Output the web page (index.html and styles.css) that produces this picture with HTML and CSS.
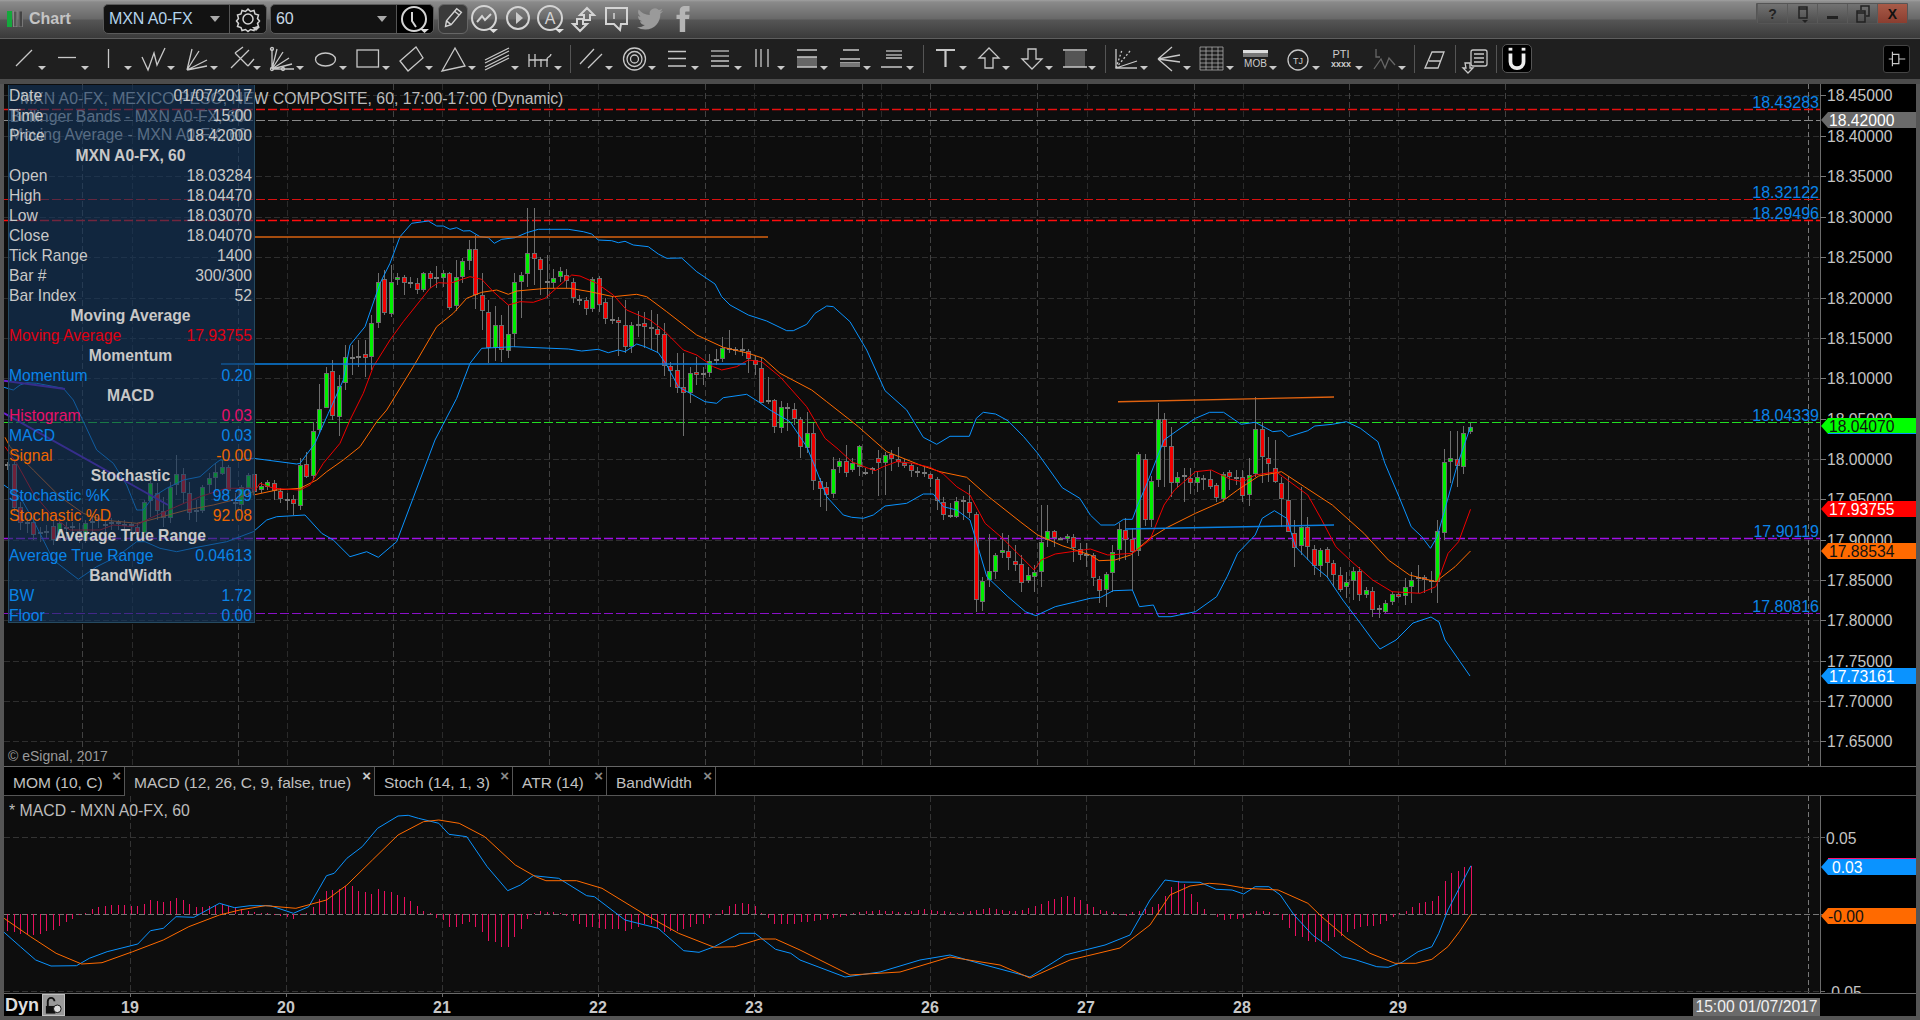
FILE: index.html
```html
<!DOCTYPE html>
<html lang="en">
<head>
<meta charset="utf-8">
<title>Chart</title>
<link rel="stylesheet" href="styles.css">
</head>
<body>
<div class="app">
  <header class="titlebar">
    <svg class="logo" viewBox="0 0 16 16" width="16" height="16"><rect x="0" y="0" width="5" height="16" fill="#14a83c"/><rect x="6.5" y="0" width="3.5" height="16" fill="#555" stroke="#888"/><rect x="12" y="0" width="3.5" height="16" fill="#444" stroke="#777"/></svg>
    <span class="app-name">Chart</span>
    <div class="combo combo-sym">
      <span class="combo-text">MXN A0-FX</span><i class="caret"></i>
      <span class="combo-btn">
        <svg viewBox="0 0 30 30" width="30" height="30"><path class="t" d="M15 5l2.500 2.500 3.500-1 1 3.500 3.500 1-1 3.500 2 2.500-2 2.500 1 3-3.500 1-1 3-3.500-1-2.500 2-2.500-2-3.500 1-1-3-3.500-1 1-3-2-2.500 2-2.500-1-3.500 3.500-1 1-3.500 3.500 1z"/><circle class="t" cx="15" cy="15" r="5"/><path fill="#ccc" d="M19 23h8l-4 4z"/></svg>
      </span>
    </div>
    <div class="combo combo-int">
      <span class="combo-text int-text">60</span><i class="caret caret-int"></i>
      <span class="combo-btn clock-btn">
        <svg viewBox="0 0 36 30" width="36" height="30"><circle class="t thick" cx="17" cy="15" r="12"/><path class="t thick" d="M15 8v9l4 6"/><path fill="#ddd" d="M23 25h9l-4.500 4z"/></svg>
      </span>
    </div>
    <button class="pen" type="button" aria-label="Draw">
      <svg viewBox="0 0 30 30" width="29" height="30"><path class="t" d="M7 23l1-6L19 4l5 4L13 21zM8 17l5 4M17 7l5 4"/></svg>
    </button>
    <svg class="title-icon" viewBox="0 0 32 32" width="32" height="32"><circle class="t thick" cx="15" cy="15" r="12"/><path class="t thick" d="M8 19l5-6 3 4 6-6"/><path fill="#ddd" d="M20 26h9l-4.500 4z"/></svg>
    <svg class="title-icon" viewBox="0 0 32 32" width="32" height="32"><circle class="t thick" cx="16" cy="15" r="11"/><path fill="#ccc" d="M14 9l7 6-7 6z"/></svg>
    <svg class="title-icon" viewBox="0 0 32 32" width="32" height="32"><circle class="t thick" cx="15" cy="15" r="12"/><text class="ic-a" x="15" y="21" text-anchor="middle">A</text><path fill="#ddd" d="M20 26h9l-4.500 4z"/></svg>
    <svg class="title-icon" viewBox="0 0 32 32" width="32" height="32"><path class="t thick" d="M19 5l7 7-4 0 0 5-6 0 0-5-4 0zM12 28l-7-7 4 0 0-5 6 0 0 5 4 0z"/></svg>
    <svg class="title-icon" viewBox="0 0 32 32" width="32" height="32"><path class="t thick" d="M5 5h21v16h-6l-1 6-6-6H5z"/><path class="t" d="M13 10v6"/></svg>
    <svg class="title-icon title-tw" viewBox="0 0 24 24" width="26" height="26"><path fill="#9a9a9a" d="M23.953 4.570a10 10 0 01-2.825.775 4.958 4.958 0 002.163-2.723c-.951.555-2.005.959-3.127 1.184a4.920 4.920 0 00-8.384 4.482C7.690 8.095 4.067 6.130 1.640 3.162a4.822 4.822 0 00-.666 2.475c0 1.710.870 3.213 2.188 4.096a4.904 4.904 0 01-2.228-.616v.060a4.923 4.923 0 003.946 4.827 4.996 4.996 0 01-2.212.085 4.936 4.936 0 004.604 3.417 9.867 9.867 0 01-6.102 2.105c-.390 0-.779-.023-1.170-.067a13.995 13.995 0 007.557 2.209c9.053 0 13.998-7.496 13.998-13.985 0-.210 0-.420-.015-.630A9.935 9.935 0 0024 4.590z"/></svg>
    <svg class="title-icon title-fb" viewBox="0 0 24 24" width="26" height="26"><path fill="#b5b5b5" d="M9 8H6v4h3v12h5V12h3.600l.400-4h-4V6.300c0-1 .200-1.300 1.100-1.300H18V0h-3.800C10.600 0 9 1.600 9 4.600z"/></svg>
    <div class="winbtns">
      <span class="wb">?</span>
      <span class="wb"><svg viewBox="0 0 14 18" width="14" height="18"><path class="d" d="M3 2h8v11H3zM3 4h8"/><path fill="#222" d="M6 15h6l-3 3z"/></svg></span>
      <span class="wb"><svg viewBox="0 0 14 18" width="14" height="18"><rect x="1" y="11" width="11" height="3" fill="#222"/></svg></span>
      <span class="wb"><svg viewBox="0 0 16 18" width="16" height="18"><path class="d" d="M2 6h8v11H2zM2 8h8M6 5V1h8v10h-3"/></svg></span>
      <span class="wb wb-close">X</span>
    </div>
  </header>

  <nav class="toolbar">
    <span class="tb"><svg class="ic" viewBox="0 0 32 40"><path class="s" d="M8 27L24 11"/></svg></span>
    <span class="tb"><svg class="ic" viewBox="0 0 32 40"><path class="s" d="M7 18.500H25"/></svg></span>
    <span class="tb"><svg class="ic" viewBox="0 0 32 40"><path class="s" d="M14.500 10V29"/></svg></span>
    <span class="tb"><svg class="ic" viewBox="0 0 32 40"><path class="s" d="M5 18L11 31 17 14 20 26 28 9"/></svg></span>
    <span class="tb"><svg class="ic" viewBox="0 0 32 40"><path class="s" d="M7 31L12 10M7 31L19 12M7 31L27 21M7 31L27 27"/></svg></span>
    <span class="tb"><svg class="ic" viewBox="0 0 32 40"><path class="s" d="M8 29L17 20M12 14L25 27M12 14L20 8M17 20L26 11M25 27L31 20"/></svg></span>
    <span class="tb"><svg class="ic" viewBox="0 0 32 40"><path class="s" d="M6 30V10M6 30L11 10M6 30L17 13M6 30L23 19M6 30L26 25M6 30H28"/><circle class="s" cx="6" cy="30" r="1.500"/><circle class="s" cx="6" cy="10" r="1.500"/><circle class="s" cx="17" cy="30" r="1.500"/></svg></span>
    <span class="tb"><svg class="ic" viewBox="0 0 32 40"><ellipse class="s" cx="16.500" cy="20.500" rx="10" ry="6.500"/></svg></span>
    <span class="tb"><svg class="ic" viewBox="0 0 32 40"><rect class="s" x="5" y="11" width="21.500" height="17"/></svg></span>
    <span class="tb"><svg class="ic" viewBox="0 0 32 40"><path class="s" d="M5 22L21 8 28 19 13 32z"/></svg></span>
    <span class="tb"><svg class="ic" viewBox="0 0 32 40"><path class="s" d="M4 32L17 9 27 27z"/></svg></span>
    <span class="tb"><svg class="ic" viewBox="0 0 32 40"><path class="s" d="M4 21L28 9M4 24L28 12M4 28L28 16M4 31L28 19"/></svg></span>
    <span class="tb"><svg class="ic" viewBox="0 0 32 40"><path class="s" d="M5 15V28M11 15V28M17 20V28M23 20V28M5 21H24M23 20C23 18 27 18 27 15"/></svg></span>
    <i class="tsep sep1"></i>
    <span class="tb"><svg class="ic" viewBox="0 0 32 40"><path class="s" d="M5 25L19 10M13 29L27 15"/></svg></span>
    <span class="tb"><svg class="ic" viewBox="0 0 32 40"><circle class="s" cx="16.500" cy="20" r="11"/><circle class="s" cx="16.500" cy="20" r="7.500"/><circle class="s" cx="16.500" cy="20" r="4"/></svg></span>
    <span class="tb"><svg class="ic" viewBox="0 0 32 40"><path class="s" d="M7 12.500H25M7 19.500H25M7 27H25"/></svg></span>
    <span class="tb"><svg class="ic" viewBox="0 0 32 40"><path class="s2" d="M7 12H25M7 17H25"/><path class="s" d="M7 22H25M7 27H25"/></svg></span>
    <span class="tb"><svg class="ic" viewBox="0 0 32 40"><path class="s" d="M9 10V28M14 10V28M21 10V28"/></svg></span>
    <span class="tb"><svg class="ic" viewBox="0 0 32 40"><rect x="7" y="18" width="20" height="10" fill="#666"/><path class="s" d="M7 11H27M7 18H27M7 28H27"/></svg></span>
    <span class="tb"><svg class="ic" viewBox="0 0 32 40"><path class="s" d="M10 11H26M7 20H27M7 24H27"/><rect x="7" y="24" width="20" height="4" fill="#777"/></svg></span>
    <span class="tb"><svg class="ic" viewBox="0 0 32 40"><path class="s2" d="M10 12H26M10 16H26"/><path class="s" d="M10 19H26M5 28H26"/></svg></span>
    <i class="tsep sep2"></i>
    <span class="tb"><svg class="ic" viewBox="0 0 32 40"><path class="s thick" d="M7 11H26M16.500 11V28"/></svg></span>
    <span class="tb"><svg class="ic" viewBox="0 0 32 40"><path class="s" d="M17 9L27 19H21V29H13V19H7z"/></svg></span>
    <span class="tb"><svg class="ic" viewBox="0 0 32 40"><path class="s" d="M17 30L27 20H21V10H13V20H7z"/></svg></span>
    <span class="tb"><svg class="ic" viewBox="0 0 32 40"><rect x="7" y="12" width="20" height="16" fill="#555"/><path class="s" d="M5 11H29M5 28H29"/></svg></span>
    <i class="tsep sep3"></i>
    <span class="tb"><svg class="ic" viewBox="0 0 32 40"><path class="s" d="M6 10V29H27M6 29L27 22"/><path class="s" stroke-dasharray="2 2" d="M6 29L20 12M6 29L12 11"/></svg></span>
    <span class="tb"><svg class="ic" viewBox="0 0 32 40"><path class="s" d="M5 20L19 8M5 20L27 16M5 20L27 23M5 20L19 32"/></svg></span>
    <span class="tb"><svg class="ic" viewBox="0 0 32 40"><path class="s thin" d="M4 8h23v23H4zM4 12h23M4 16h23M4 20h23M4 24h23M4 28h23M10 8v23M16 8v23M22 8v23"/></svg></span>
    <span class="tb"><svg class="ic" viewBox="0 0 32 40"><rect x="4" y="11" width="25" height="3" fill="#ddd"/><rect x="4" y="14" width="25" height="4" fill="#777"/><text class="ic-mob" x="16.500" y="28" text-anchor="middle">MOB</text></svg></span>
    <span class="tb"><svg class="ic" viewBox="0 0 32 40"><circle class="s" cx="16" cy="21" r="10"/><text class="ic-tj" x="16" y="24.500" text-anchor="middle">TJ</text></svg></span>
    <span class="tb"><svg class="ic" viewBox="0 0 32 40"><text class="ic-pti" x="16" y="19" text-anchor="middle">PTI</text><text class="ic-x" x="16" y="28" text-anchor="middle">xxxx</text></svg></span>
    <span class="tb"><svg class="ic" viewBox="0 0 32 40"><path class="s dim" d="M8 10V18H12M6 30L13 20 17 29 21 19 27 26"/></svg></span>
    <i class="tsep sep4"></i>
    <span class="tb-plain"><svg viewBox="0 0 30 40" width="30" height="40"><path class="s" d="M5 29L12 13 24 13 18 29zM9 22L21 22"/></svg></span>
    <i class="tsep"></i>
    <span class="tb-plain"><svg viewBox="0 0 30 40" width="30" height="40"><rect class="s" x="10" y="11" width="16" height="16" rx="2"/><path class="s" d="M13 15h10M13 19h10M13 23h10M4 24h5v5h3l-5 5-5-5h3z"/></svg></span>
    <i class="tsep"></i>
    <span class="magnet"><svg viewBox="0 0 30 28" width="30" height="28"><path fill="none" stroke="#eee" stroke-width="4" d="M8 8V17C8 26 22 26 22 17V8"/><rect x="6" y="2" width="4" height="3" fill="#eee"/><rect x="20" y="2" width="4" height="3" fill="#eee"/></svg></span>
    <span class="pin"><svg viewBox="0 0 24 24" width="22" height="22"><path class="s" d="M7 7h7v10H7zM14 12h7M3 12h4M7 4v3M7 17v3"/></svg></span>
  </nav>
  <div class="strip"></div>

  <main class="frame">
    <section class="pane-main">
      <svg class="canvas" id="mainChart" viewBox="4 84 1912 682" width="1912" height="682">
        <rect class="chart-bg" x="4" y="84" width="1816" height="682"/>
        <g id="mainGrid"></g>
        <text class="ttl" x="20" y="104">MXN A0-FX, MEXICO PESO, NEW COMPOSITE, 60, 17:00-17:00 (Dynamic)</text>
        <text class="ttl" x="10" y="122">Bollinger Bands - MXN A0-FX, 60</text>
        <text class="ttl" x="10" y="140">Moving Average - MXN A0-FX, 60</text>
        <g id="levels"></g>
        <g id="mainSeries"></g>
        <text class="copy" x="8" y="761">© eSignal, 2017</text>
        <rect class="axis-bg" x="1820" y="84" width="96" height="682"/>
        <path class="axis-line" d="M1820.500 84V766"/>
        <g id="mainTicks"></g>
        <g class="ax">
          <text x="1827" y="101">18.45000</text>
          <text x="1827" y="142">18.40000</text>
          <text x="1827" y="182">18.35000</text>
          <text x="1827" y="223">18.30000</text>
          <text x="1827" y="263">18.25000</text>
          <text x="1827" y="304">18.20000</text>
          <text x="1827" y="344">18.15000</text>
          <text x="1827" y="384">18.10000</text>
          <text x="1827" y="425">18.05000</text>
          <text x="1827" y="465">18.00000</text>
          <text x="1827" y="505">17.95000</text>
          <text x="1827" y="546">17.90000</text>
          <text x="1827" y="586">17.85000</text>
          <text x="1827" y="626">17.80000</text>
          <text x="1827" y="667">17.75000</text>
          <text x="1827" y="707">17.70000</text>
          <text x="1827" y="747">17.65000</text>
        </g>
        <g class="lvl" text-anchor="end">
          <text x="1819" y="108">18.43283</text>
          <text x="1819" y="198">18.32122</text>
          <text x="1819" y="219">18.29496</text>
          <text x="1819" y="421">18.04339</text>
          <text x="1819" y="537">17.90119</text>
          <text x="1819" y="612">17.80816</text>
        </g>
        <polygon fill="#6a6a6a" points="1821,120 1828,112 1916,112 1916,128 1828,128"/>
        <text class="mk mk-w" x="1829" y="126">18.42000</text>
        <polygon fill="#00ff00" points="1821,426 1828,418 1916,418 1916,434 1828,434"/>
        <path stroke="#0a93ff" d="M1828 433.500H1916"/>
        <text class="mk mk-k" x="1829" y="432">18.04070</text>
        <polygon fill="#ff0000" points="1821,509 1828,501 1916,501 1916,517 1828,517"/>
        <text class="mk mk-w" x="1829" y="515">17.93755</text>
        <polygon fill="#ff6a00" points="1821,551 1828,543 1916,543 1916,559 1828,559"/>
        <text class="mk mk-k" x="1829" y="557">17.88534</text>
        <polygon fill="#0a93ff" points="1821,676 1828,668 1916,668 1916,684 1828,684"/>
        <text class="mk mk-w" x="1829" y="682">17.73161</text>
      </svg>

      <aside class="info">
        <div class="row"><span>Date</span><span>01/07/2017</span></div>
        <div class="row"><span>Time</span><span>15:00</span></div>
        <div class="row"><span>Price</span><span>18.42000</span></div>
        <div class="row hd">MXN A0-FX, 60</div>
        <div class="row"><span>Open</span><span>18.03284</span></div>
        <div class="row"><span>High</span><span>18.04470</span></div>
        <div class="row"><span>Low</span><span>18.03070</span></div>
        <div class="row"><span>Close</span><span>18.04070</span></div>
        <div class="row"><span>Tick Range</span><span>1400</span></div>
        <div class="row"><span>Bar #</span><span>300/300</span></div>
        <div class="row"><span>Bar Index</span><span>52</span></div>
        <div class="row hd">Moving Average</div>
        <div class="row c-red"><span>Moving Average</span><span>17.93755</span></div>
        <div class="row hd">Momentum</div>
        <div class="row c-blue"><span>Momentum</span><span>0.20</span></div>
        <div class="row hd">MACD</div>
        <div class="row c-pink"><span>Histogram</span><span>0.03</span></div>
        <div class="row c-blue"><span>MACD</span><span>0.03</span></div>
        <div class="row c-orange"><span>Signal</span><span>-0.00</span></div>
        <div class="row hd">Stochastic</div>
        <div class="row c-blue"><span>Stochastic %K</span><span>98.29</span></div>
        <div class="row c-orange"><span>Stochastic %D</span><span>92.08</span></div>
        <div class="row hd">Average True Range</div>
        <div class="row c-blue"><span>Average True Range</span><span>0.04613</span></div>
        <div class="row hd">BandWidth</div>
        <div class="row c-blue"><span>BW</span><span>1.72</span></div>
        <div class="row c-blue"><span>Floor</span><span>0.00</span></div>
      </aside>
    </section>

    <div class="tabs">
      <div class="tab tab-mom">MOM (10, C)<b class="x">×</b></div>
      <div class="tab tab-macd active">MACD (12, 26, C, 9, false, true)<b class="x">×</b></div>
      <div class="tab tab-stoch">Stoch (14, 1, 3)<b class="x">×</b></div>
      <div class="tab tab-atr">ATR (14)<b class="x">×</b></div>
      <div class="tab tab-bw">BandWidth<b class="x">×</b></div>
    </div>

    <section class="pane-sub">
      <svg class="canvas" id="subChart" viewBox="4 796 1912 197" width="1912" height="197">
        <rect class="chart-bg" x="4" y="796" width="1816" height="197"/>
        <g id="subGrid"></g>
        <text class="ttl" x="9" y="816">* MACD - MXN A0-FX, 60</text>
        <g id="subSeries"></g>
        <rect class="axis-bg" x="1820" y="796" width="96" height="197"/>
        <path class="axis-line" d="M1820.500 796V993M1820 837.500h5M1820 914.500h5M1820 991.500h5"/>
        <g class="ax">
          <text x="1826" y="844">0.05</text>
          <text x="1826" y="998">-0.05</text>
        </g>
        <path stroke="#ff1070" d="M1828 858.500H1916"/>
        <polygon fill="#0a93ff" points="1821,867 1828,859 1916,859 1916,875 1828,875"/>
        <text class="mk mk-w" x="1832" y="873">0.03</text>
        <polygon fill="#ff6a00" points="1821,916 1828,908 1916,908 1916,924 1828,924"/>
        <text class="mk mk-k" x="1828" y="922">-0.00</text>
      </svg>
    </section>

    <footer class="timebar">
      <svg class="time-axis" viewBox="4 994 1912 22" width="1912" height="22">
        <path class="axis-line" d="M130.500 994v3M286.500 994v3M442.500 994v3M598.500 994v3M754.500 994v3M930.500 994v3M1086.500 994v3M1242.500 994v3M1398.500 994v3"/>
        <g class="dates" text-anchor="middle">
          <text x="130" y="1013">19</text>
          <text x="286" y="1013">20</text>
          <text x="442" y="1013">21</text>
          <text x="598" y="1013">22</text>
          <text x="754" y="1013">23</text>
          <text x="930" y="1013">26</text>
          <text x="1086" y="1013">27</text>
          <text x="1242" y="1013">28</text>
          <text x="1398" y="1013">29</text>
        </g>
      </svg>
      <span class="dyn">Dyn</span>
      <span class="lock"><svg viewBox="0 0 22 20" width="21" height="20"><path fill="none" stroke="#111" stroke-width="2" d="M5 12V6a3.500 3.500 0 017 0"/><rect x="3" y="11" width="10" height="8" fill="#111"/><circle cx="15" cy="14" r="4" fill="#ddd" stroke="#111"/></svg></span>
      <span class="stamp">15:00 01/07/2017</span>
    </footer>
  </main>
</div>
<script src="chart.js"></script>
</body>
</html>
```
FILE: styles.css
```css
* { box-sizing: border-box; }
html, body { margin: 0; padding: 0; background: #555; }
body { font-family: "Liberation Sans", Arial, sans-serif; font-size: 16px; color: #c8c8c8; }
.app { width: 1920px; height: 1020px; display: flex; flex-direction: column; overflow: hidden; }

/* title bar */
.titlebar { height: 38px; flex: none; display: flex; align-items: center; padding-left: 7px;
  background: linear-gradient(#a0a0a0 0, #8a8a8a 2px, #686868 19px, #555 20px, #3a3a3a 38px); }
.logo { flex: none; }
.app-name { font-weight: bold; font-size: 16px; color: #c4c4c4; margin-left: 6px; width: 74px; }
.combo { display: flex; align-items: center; height: 30px; background: #121212; border: 1px solid #5a5a5a; border-radius: 5px; flex: none; position: relative; }
.combo-sym { width: 164px; }
.combo-int { width: 164px; margin-left: 3px; }
.combo-text { color: #b4d4ec; font-size: 16px; padding-left: 5px; letter-spacing: -.1px; width: 106px; }
.int-text { color: #c8d8e4; width: 106px; }
.caret { width: 0; height: 0; border: 5px solid transparent; border-top: 6px solid #aaa; border-bottom: 0; }
.combo-btn { position: absolute; right: 0; top: 0; width: 37px; height: 28px; border-left: 1px solid #555; display: flex; align-items: center; justify-content: center; }
.clock-btn { background: #000; border-radius: 0 5px 5px 0; }
.pen { width: 30px; height: 30px; margin-left: 4px; padding: 0; background: #3a3a3a; border: 1px solid #666; border-radius: 6px; flex: none; display: flex; align-items: center; justify-content: center; }
.title-icon { flex: none; margin-left: 1px; }
.title-tw { margin-left: 4px; }
.title-fb { margin-left: 7px; }
.t { fill: none; stroke: #d4d4d4; stroke-width: 1.5; }
.t.thick { stroke-width: 2; }
.d { fill: none; stroke: #222; stroke-width: 1.5; }
.ic-a { font-size: 16px; fill: #d4d4d4; }
.winbtns { margin-left: auto; margin-right: 12px; align-self: flex-start; margin-top: 3px; display: flex; border: 1px solid #555; border-radius: 0 0 4px 4px; }
.wb { width: 30px; height: 19px; display: flex; align-items: center; justify-content: center; background: linear-gradient(#737373, #4c4c4c); border-left: 1px solid #5a5a5a; font-size: 14px; font-weight: bold; color: #222; }
.wb-close { background: linear-gradient(#a85a48, #8a3e30); color: #111; }

/* toolbar */
.toolbar { height: 41px; flex: none; display: flex; align-items: stretch; padding-left: 8px; background: #1f1f1f; border-top: 1px solid #5e5e5e; position: relative; }
.tb { width: 43px; flex: none; position: relative; display: block; }
.tb::after { content: ""; position: absolute; left: 30px; top: 27px; border: 4px solid transparent; border-top: 4px solid #c8c8c8; border-bottom: 0; }
.ic { display: block; width: 32px; height: 40px; }
.s { fill: none; stroke: #c8c8c8; stroke-width: 1.3; }
.s2 { fill: none; stroke: #888; stroke-width: 2; }
.s.thick { stroke-width: 2.2; }
.s.thin { stroke-width: .8; stroke: #aaa; }
.s.dim { stroke: #666; }
.ic-mob { font-size: 10px; fill: #ccc; }
.ic-tj { font-size: 9px; fill: #ccc; }
.ic-pti { font-size: 11px; fill: #ccc; }
.ic-x { font-size: 9px; font-weight: bold; fill: #ccc; }
.tsep { flex: none; width: 1px; height: 28px; margin: 6px 5px 0; background: #555; }
.sep1 { margin: 6px 4px 0 3px; }
.sep2 { margin: 6px 5px 0 4px; }
.sep3 { margin: 6px 4px 0 4px; }
.sep4 { margin: 6px 5px 0 3px; }
.tb-plain { flex: none; width: 30px; display: block; }
.magnet { flex: none; width: 30px; height: 29px; margin-top: 5px; background: #000; border: 1px solid #555; border-radius: 5px; display: flex; align-items: center; justify-content: center; }
.pin { position: absolute; right: 10px; top: 6px; width: 27px; height: 28px; background: #000; border: 1px solid #444; border-radius: 3px; display: flex; align-items: center; justify-content: center; }
.strip { height: 5px; flex: none; background: #4c4c4c; }

/* chart frame */
.frame { flex: 1; min-height: 0; margin: 0 4px 4px; display: flex; flex-direction: column; }
.pane-main { height: 682px; flex: none; position: relative; }
.pane-sub { height: 197px; flex: none; }
.canvas { display: block; }
.chart-bg { fill: #0d0d0d; }
.axis-bg { fill: #000; }
.axis-line { fill: none; stroke: #6a6a6a; }
.ttl { font-size: 15.8px; fill: #bcbcbc; }
.copy { font-size: 14px; fill: #9a9a9a; }
.ax text { font-size: 15.7px; fill: #c4c4c4; }
.lvl text { font-size: 16px; fill: #0a84e8; }
.mk { font-size: 15.7px; }
.mk-w { fill: #fff; }
.mk-k { fill: #111; }

/* data window */
.info { position: absolute; left: 4px; top: 1px; width: 247px; height: 538px; padding: 1px 2px 0 0; background: rgba(20, 55, 95, .6); border: 1px solid #264a60; border-top: 0; font-size: 15.7px; }
.row { display: flex; justify-content: space-between; height: 20px; line-height: 20px; white-space: nowrap; }
.row.hd { justify-content: center; font-weight: bold; color: #c8c8c8; }
.c-red { color: #e00012; }
.c-blue { color: #0a84e8; }
.c-pink { color: #e8106a; }
.c-orange { color: #ee6600; }

/* tabs */
.tabs { height: 30px; flex: none; display: flex; background: #000; border-top: 1px solid #666; border-bottom: 1px solid #555; }
.tab { position: relative; height: 28px; padding-left: 9px; line-height: 32px; font-size: 15.5px; color: #c0c0c0; background: #000; border-right: 1px solid #555; white-space: nowrap; }
.tab.active { background: #0d0d0d; height: 29px; }
.tab-mom { width: 121px; }
.tab-macd { width: 250px; }
.tab-stoch { width: 138px; }
.tab-atr { width: 94px; }
.tab-bw { width: 109px; }
.x { position: absolute; right: 3px; top: 2px; font-size: 15px; line-height: 14px; color: #8a8a8a; }
.tab.active .x { color: #ccc; }

/* time axis */
.timebar { height: 23px; flex: none; position: relative; display: flex; align-items: stretch; background: #000; border-top: 1px solid #6a6a6a; }
.time-axis { position: absolute; left: 0; top: 0; }
.dates text { font-size: 16px; font-weight: bold; fill: #c8c8c8; }
.dyn { position: relative; font-weight: bold; font-size: 18px; color: #ddd; width: 38px; padding-left: 1px; line-height: 22px; }
.lock { position: relative; width: 23px; height: 22px; background: #999; border: 1px solid #c0c0c0; display: flex; align-items: center; justify-content: center; }
.stamp { position: absolute; right: 96px; bottom: 0; width: 127px; height: 18px; background: #6a6a6a; color: #f0f0f0; font-size: 15.7px; line-height: 18px; text-align: center; white-space: nowrap; }
```
FILE: chart.js
```js
(function () {
  var NS = 'http://www.w3.org/2000/svg';
  function el(parent, name, attrs) {
    var n = document.createElementNS(NS, name);
    for (var k in attrs) n.setAttribute(k, attrs[k]);
    parent.appendChild(n);
    return n;
  }
  function $(id) { return document.getElementById(id); }

  /* Reading frames: [originX, originY, scaleX, scaleY] */
  var Z4 = [0, 350, 3, 3], Z12 = [200, 280, 3, 3], Z9 = [350, 190, 3, 3], Z11 = [780, 350, 3, 3],
      Z10 = [950, 390, 2.851, 3], Z7 = [0, 740, 1.96, 3], Z8 = [1200, 800, 2.178, 3], F = [0, 0, 1, 1];
  function pts(f, s) {
    return s.trim().split(/\s+/).map(function (p) {
      var a = p.split(',');
      return [f[0] + a[0] / f[2], f[1] + a[1] / f[3]];
    });
  }
  function poly(parent, list, color, w) {
    el(parent, 'polyline', {
      points: list.map(function (p) { return p[0].toFixed(1) + ',' + p[1].toFixed(1); }).join(' '),
      fill: 'none', stroke: color, 'stroke-width': w || 1, 'stroke-linejoin': 'round'
    });
  }

  /* ---------- grid ---------- */
  var mainGrid = $('mainGrid'), subGrid = $('subGrid'), ticks = $('mainTicks');
  var tickY = [95, 136, 176, 217, 257, 298, 338, 378, 419, 459, 499, 540, 580, 620, 661, 701, 741];
  var vDim = [132, 287, 442, 598, 754, 881, 1087, 1243, 1398];
  var vMid = [82, 238, 393, 549, 705, 862, 930, 1037, 1194, 1349, 1505];
  tickY.forEach(function (y) {
    el(mainGrid, 'path', { d: 'M4 ' + (y + .5) + 'H1820', stroke: '#2e2e2e', 'stroke-dasharray': '6 3' });
    el(ticks, 'path', { d: 'M1820 ' + (y + .5) + 'h6', stroke: '#7a7a7a' });
  });
  vDim.forEach(function (x) { el(mainGrid, 'path', { d: 'M' + (x + .5) + ' 84V766', stroke: '#2a2a2a', 'stroke-dasharray': '6 3' }); });
  vMid.forEach(function (x) { el(mainGrid, 'path', { d: 'M' + (x + .5) + ' 84V766', stroke: '#414141', 'stroke-dasharray': '6 3' }); });
  el(mainGrid, 'path', { d: 'M1808.500 84V766', stroke: '#777', 'stroke-dasharray': '5 3' });
  [130, 286, 442, 598, 754, 930, 1086, 1242, 1398].forEach(function (x) {
    el(subGrid, 'path', { d: 'M' + (x + .5) + ' 796V993', stroke: '#333', 'stroke-dasharray': '6 3' });
  });
  el(subGrid, 'path', { d: 'M1808.500 796V993', stroke: '#777', 'stroke-dasharray': '5 3' });
  el(subGrid, 'path', { d: 'M4 837.500H1820M4 991.500H1820', stroke: '#333', 'stroke-dasharray': '6 3' });
  el(subGrid, 'path', { d: 'M4 914.500H1820', stroke: '#777', 'stroke-dasharray': '6 3' });

  /* ---------- price levels and trend lines ---------- */
  var lv = $('levels');
  [[109.5, '#e81010', 1.3], [120.5, '#8a8a8a', 1], [199.5, '#d81010', 1], [220.5, '#ff0d0d', 1.5],
   [422.5, '#22dd22', 1], [538.5, '#a010e8', 1.4], [613.5, '#8a10c8', 1.2]].forEach(function (h) {
    el(lv, 'path', { d: 'M4 ' + h[0] + 'H1820', stroke: h[1], 'stroke-width': h[2], 'stroke-dasharray': '9 3' });
  });

  /* ---------- candles ---------- */
  var S = $('mainSeries');
  var gW = el(S, 'g', {}), gB = el(S, 'g', {});
  function bars(f, rows) {
    rows.forEach(function (r) {
      var fx = f[0] + r[0] / f[2];
      var x = Math.round(351.5 + 6.5 * Math.round((fx - 351.5) / 6.5));
      var c = function (v) { return f[1] + v / f[3]; };
      var t = Math.round(c(r[1])), b = Math.round(c(r[2]));
      el(gW, 'path', { d: 'M' + (x + .5) + ' ' + Math.round(c(r[3])) + 'V' + Math.round(c(r[4])), stroke: '#6e6e6e' });
      if (r[5] === 'd') {
        el(gB, 'rect', { x: x - 2, y: t - 1, width: 5, height: 2, fill: '#7a7a7a' });
      } else {
        el(gB, 'rect', { x: x - 1.5, y: t + .5, width: 4, height: Math.max(1, b - t), fill: r[5] === 'g' ? '#00f000' : '#f40000', stroke: '#6e6e6e' });
      }
    });
  }
  bars(Z4, [
    [21,345,345,335,360,'d'],[40,342,470,330,485,'r'],[60,470,515,455,540,'r'],[79,520,520,505,550,'d'],[99,515,553,490,570,'r'],
    [118,548,548,530,575,'d'],[138,545,545,525,565,'d'],[157,528,568,510,585,'r'],[177,520,550,515,570,'g'],[196,533,533,515,570,'d'],
    [216,530,530,515,555,'d'],[235,547,547,520,580,'d'],[255,518,570,510,580,'g'],[275,515,515,500,545,'d'],[294,510,510,495,535,'d'],
    [313,525,525,510,545,'d'],[333,518,518,505,540,'d'],[352,520,520,510,540,'d'],[372,525,525,510,540,'d'],[391,525,525,515,545,'d'],
    [411,530,545,520,560,'r'],[430,455,545,450,550,'g'],[450,400,450,380,500,'g'],[469,428,480,400,510,'r'],[489,484,502,440,530,'r'],
    [508,412,502,395,520,'g'],[528,373,403,315,435,'g'],[547,373,425,355,460,'r'],[567,428,487,395,510,'r'],[586,482,482,450,515,'d'],
    [606,410,480,405,490,'g'],[625,385,403,370,430,'g'],[645,365,382,340,420,'g'],[664,352,368,330,375,'g'],[684,350,420,345,440,'r'],
    [703,460,460,430,490,'d'],[723,410,463,405,480,'g'],[742,375,410,370,440,'g'],[762,372,422,368,445,'r']
  ]);
  bars(Z12, [
    [182,618,628,605,640,'g'],[202,607,618,600,630,'g'],[221,610,630,600,660,'r'],[241,634,655,625,670,'r'],[260,660,660,640,690,'d'],
    [280,658,670,645,705,'r'],[299,556,676,535,690,'g'],[319,553,587,515,595,'r'],[338,452,586,425,600,'g'],[358,386,448,312,460,'g'],
    [377,278,380,262,385,'g'],[397,272,406,240,420,'r'],[416,317,407,285,468,'g'],[436,232,306,195,330,'g']
  ]);
  bars(Z9, [
    [5,503,503,465,555,'d'],[25,500,500,450,530,'d'],[44,493,500,450,560,'r'],[64,400,497,375,540,'g'],[83,277,395,250,415,'g'],
    [103,268,367,240,375,'r'],[122,277,368,225,380,'g'],[142,262,268,250,285,'g'],[161,262,277,255,315,'r'],[181,278,278,260,295,'d'],
    [200,278,298,265,312,'r'],[220,250,298,245,305,'g'],[239,248,265,243,295,'r'],[259,263,263,228,295,'d'],[278,250,260,240,290,'g'],
    [298,250,352,245,360,'r'],[317,260,346,210,362,'g'],[337,214,257,205,278,'g'],[356,176,211,150,240,'g'],[376,176,313,135,358,'r'],
    [395,316,360,250,420,'r'],[415,367,472,330,520,'r'],[434,406,472,348,512,'g'],[454,406,478,375,515,'r'],[473,433,481,345,505,'g'],
    [493,277,430,250,470,'g'],[512,254,274,245,385,'g'],[532,190,250,55,290,'g'],[551,188,205,55,285,'r'],[571,208,238,200,315,'r'],
    [590,275,275,195,325,'d'],[610,263,277,238,295,'g'],[629,244,258,232,275,'g'],[649,254,270,238,295,'r'],[668,275,322,265,340,'r'],
    [688,330,330,315,345,'d'],[707,331,355,320,375,'r'],[727,266,355,260,365,'g'],[746,265,343,258,365,'r'],[766,337,385,325,402,'r'],
    [785,390,390,320,402,'d'],[805,389,397,380,498,'r'],[824,404,467,330,490,'r'],[844,404,467,395,490,'g'],[863,401,406,363,440,'g'],
    [883,400,409,365,475,'r'],[902,410,415,360,480,'r'],[922,418,431,372,490,'r'],[941,433,526,400,557,'r'],[961,529,541,515,590,'r'],
    [980,541,590,490,610,'r'],[1000,590,607,490,737,'r'],[1019,550,605,530,640,'g'],[1039,547,553,500,585,'r'],[1058,551,551,530,585,'d'],
    [1078,512,547,492,560,'g'],[1097,510,510,478,525,'d'],[1117,475,505,440,515,'g'],[1136,477,477,420,490,'d'],[1156,481,481,470,495,'d'],
    [1175,480,480,445,497,'d'],[1195,484,505,478,548,'r'],[1214,511,523,498,555,'r'],[1234,535,635,505,640,'r'],[1253,633,633,562,642,'d'],
    [1273,631,709,626,728,'r'],[1292,652,712,632,730,'g'],[1312,653,653,640,722,'d'],[1331,656,683,640,705,'r']
  ]);
  bars(Z11, [
    [61,208,287,200,325,'r'],[80,250,292,185,310,'g'],[100,250,391,220,420,'r'],[119,394,415,385,470,'r'],[139,412,433,395,482,'r'],
    [158,358,430,320,445,'g'],[178,334,349,325,368,'g'],[197,334,365,285,380,'r'],[217,338,358,325,365,'g'],[236,289,348,285,378,'g'],
    [256,368,368,355,375,'d'],[275,356,356,352,372,'d'],[295,325,335,300,437,'r'],[314,314,337,305,435,'g'],[334,313,323,300,362,'r'],
    [353,326,334,290,350,'r'],[373,338,346,328,355,'r'],[392,344,360,338,382,'r'],[412,365,365,352,380,'d'],[431,368,368,352,380,'d'],
    [451,373,385,370,412,'r'],[470,388,450,380,480,'r'],[490,455,493,440,510,'r'],[509,497,497,460,505,'d'],[529,452,498,440,505,'g'],
    [548,452,452,438,510,'d'],[568,455,487,405,505,'r']
  ]);
  bars(Z10, [
    [73,373,628,365,665,'r'],[92,574,634,560,662,'g'],[110,544,566,433,590,'g'],[129,496,542,490,568,'g'],[147,479,486,430,505,'g'],
    [166,482,502,435,540,'r'],[184,512,521,465,543,'r'],[203,523,577,495,605,'r'],[221,554,571,530,580,'g'],[240,547,558,525,605,'g'],
    [258,455,544,345,590,'g'],[277,424,447,345,470,'g'],[295,424,442,420,470,'r'],[314,446,446,440,450,'d'],[332,439,445,432,460,'g'],
    [351,441,472,432,515,'r'],[370,476,492,458,510,'r'],[388,494,494,458,532,'d'],[407,494,562,490,587,'r'],[425,566,600,558,640,'r'],
    [444,553,598,545,650,'g'],[462,485,547,465,605,'g'],[481,418,478,400,512,'g'],[499,419,448,385,510,'r'],[518,448,482,415,600,'r'],
    [536,193,481,187,498,'g'],[555,206,388,192,408,'r'],[574,272,388,257,412,'g'],[592,86,268,40,290,'g'],[611,88,169,68,290,'r'],
    [630,169,276,110,320,'r'],[648,261,276,245,295,'g'],[667,258,258,235,335,'d'],[685,263,276,235,312,'r'],[704,261,276,242,305,'g'],
    [722,263,268,255,300,'r'],[741,268,289,240,298,'r'],[759,286,322,278,335,'r'],[778,251,325,245,335,'g'],[796,245,259,240,300,'r'],
    [815,264,264,240,285,'d'],[833,260,316,240,335,'r'],[852,254,313,205,347,'g'],[871,118,250,22,260,'g'],[889,118,198,95,278,'r'],
    [908,203,220,140,275,'r'],[926,233,274,150,280,'r'],[945,278,325,260,412,'r'],[963,329,424,258,425,'r'],[982,428,472,390,530,'r'],
    [1001,412,464,290,495,'g'],[1019,412,467,382,510,'r'],[1038,476,525,465,555,'r'],[1056,479,526,475,560,'g'],[1075,478,517,472,565,'r'],
    [1093,520,553,510,590,'r'],[1112,554,598,530,605,'r'],[1130,577,589,545,625,'g'],[1149,544,569,530,630,'g'],[1167,544,613,530,632,'r'],
    [1186,601,612,590,625,'g'],[1204,602,658,590,682,'r'],[1223,657,657,645,685,'d'],[1241,638,664,630,668,'g'],[1260,613,634,605,645,'g'],
    [1278,612,618,605,625,'r'],[1297,590,616,565,645,'g'],[1315,569,589,545,640,'g'],[1334,564,564,525,610,'d'],[1352,560,568,555,610,'r'],
    [1371,573,573,543,608,'d'],[1389,424,574,390,640,'g'],[1408,217,427,178,450,'g'],[1427,203,214,122,278,'g'],[1445,206,226,122,292,'r'],
    [1464,128,229,108,252,'g'],[1483,110,124,100,132,'g']
  ]);

  /* ---------- overlay studies ---------- */
  var upper = [].concat(
    pts(Z4, '12,112 40,120 60,105 80,98 110,100 190,115 220,150 255,225 290,300 340,340 380,405 410,480 430,480 460,440 500,415 550,390 600,380 640,345 660,330 700,330 760,325 890,342'),
    pts(Z12, '300,550 345,490 385,400 430,300'),
    pts(Z9, '0,465 45,410 90,280 120,220 150,140 185,100 235,93 260,108 280,108 300,118 320,113 340,123 360,122 390,140 415,143 433,160 455,148 495,143 530,128 565,118 655,118 700,125 725,132 745,150 785,152 805,158 825,154 850,165 895,170 925,192 950,205 995,204 1040,245 1095,282 1115,320 1140,345 1195,375 1250,393 1310,422 1330,422 1370,403 1395,370 1430,348 1450,350 1500,395'),
    pts(Z11, '260,0 315,122 380,180 430,262 470,283 510,259 568,259'),
    pts(Z10, '75,85 95,67 130,72 165,92 210,140 250,190 320,293 370,325 400,375 430,405 470,405 495,388 520,388 535,345 560,285 610,150 650,120 700,85 740,67 780,67 830,103 870,97 920,125 945,122 965,140 1020,122 1040,108 1090,103 1130,95 1170,115 1220,155 1240,220 1280,320 1315,410 1345,440 1370,475 1389,440 1445,230 1484,110')
  );
  var lower = [].concat(
    pts(Z4, '12,405 60,440 100,510 160,630 235,688 290,650 350,620 410,575 435,575 480,595 530,605 600,590 680,575 760,545 800,510 830,500 915,495 965,550 1000,570 1050,620 1100,605 1135,622 1190,575'),
    pts(Z9, '255,750 320,625 360,520 395,475 490,470 655,477 695,483 745,478 775,488 805,480 825,485 860,462 885,470 925,488 950,525 985,590 1020,610 1065,635 1100,640 1120,623 1190,613 1225,635 1260,660 1320,695 1350,740'),
    pts(Z11, '80,290 105,350 140,440 190,495 215,502 250,505 280,495 315,468 380,460 430,432 460,432 490,470 530,480 570,510'),
    pts(Z10, '105,560 165,620 215,665 245,677 300,650 360,635 400,625 430,622 465,602 520,600 540,650 580,645 595,680 630,680 700,665 760,620 790,560 820,490 870,435 890,385 925,362 960,385 985,470 1040,530 1075,560 1120,630 1170,700 1205,750'),
    pts(F, '1380,649 1396,640 1413,623 1431,617 1439,622 1445,640 1470,676')
  );
  var red = [].concat(
    pts(Z4, '15,290 50,340 100,430 150,490 210,540 300,540 340,525 400,530 450,505 540,465 600,440 680,415 770,415'),
    pts(Z12, '180,610 220,625 300,630 330,615 370,550 420,490 450,420 490,340 520,260 570,180'),
    pts(Z9, '160,395 240,295 265,278 300,280 360,260 395,268 430,305 475,345 510,335 550,337 585,325 630,285 665,255 690,258 740,280 790,315 830,360 900,390 940,420 1000,480 1040,495 1090,530 1115,540 1160,530 1195,510 1235,515 1290,560 1370,650 1425,745'),
    pts(Z11, '175,298 215,335 265,355 285,362 310,350 350,335 400,340 450,352 490,372 530,410 570,435 610,510'),
    pts(Z10, '100,400 150,445 240,540 260,510 300,492 400,477 450,495 520,490 570,450 610,345 640,300 700,245 745,240 800,268 835,275 870,255 930,245 1020,315 1060,390 1100,470 1140,510 1205,570 1260,605 1340,610 1385,590 1420,490 1450,455 1484,358')
  );
  var orange = [].concat(
    pts(Z4, '15,262 30,290 100,360 180,440 250,490 310,510 410,520 450,510 560,480 640,465 700,450 760,425'),
    pts(Z12, '160,645 230,630 300,625 350,600 380,575 430,540 480,500 530,425'),
    pts(Z9, '110,660 190,530 260,410 310,370 350,325 395,307 440,300 475,313 500,303 590,295 660,295 720,305 790,320 860,313 890,320 950,365 1040,435 1120,472 1195,490 1240,505 1290,550 1385,600 1430,635 1500,690'),
    pts(Z11, '235,230 320,305 420,345 480,365 560,382'),
    pts(Z10, '110,320 200,395 250,435 320,467 400,495 425,512 470,510 515,495 570,445 620,412 700,370 775,335 820,300 880,258 945,245 1010,290 1090,345 1180,430 1250,510 1310,555 1385,575 1440,530 1484,483')
  );
  poly(S, upper, '#0a93ff');
  poly(S, lower, '#0a93ff');
  poly(S, orange, '#ff6a00');
  poly(S, red, '#f00000');

  poly(S, [[254, 237], [768, 237]], '#d8620f', 1.4);
  poly(S, [[221, 364], [746, 364]], '#0a7fe0', 1.4);
  poly(S, [[1118, 401.7], [1334, 397]], '#e0620f', 1.4);
  poly(S, [[1125, 529], [1334, 525]], '#0a7fe0', 1.4);
  poly(S, [[4, 380.7], [65, 389]], '#6a20d0', 2);
  poly(S, [[4, 413], [168, 505]], '#6a20d0', 2);

  /* ---------- MACD pane ---------- */
  var sub = $('subSeries');
  var h1 = [-50,-55,-60,-60,-62,-60,-50,-48,-35,-25,-15,-3,3,15,22,25,27,28,28,25,25,30,43,40,35,40,48,42,30,20,22,25,28,30,25,20,15,8,5,3,2,-2,-5,-10,-15,-3,3,20,45,70,72,75,85,83,70,65,60,75,68,65,58,50,38,25,8,3,-12,-18,-40,-38,-30,-25,-40,-55,-80,-85,-100,-100,-70,-45,-15,3,8,7,6,3,-5,-20,-30,-40,-38,-42,-45,-45,-45,-50,-45,-40,-30,-30,-42,-55,-50,-50,-45,-40,-30,-30,-12,-2,12,25,30,32,30,25,2,-12,-30,-30,-30,-30];
  var h2 = [-25,-25,-20,-18,-15,-12,-8,-5,3,5,8,10,12,10,8,6, 5,8,12,15,12,10,8,6,3,5,8,12,15,18,15,12, 10,8,12,18,25,30,38, 45,50,55,50,42,30,20, 12,10,5,-3,-5,5,10,15,20, 30,55,80,100,90,60,35,15];
  var h3 = [3,0,-8,-18,-15,-15,-12,3,8,10,5,-3,-18,-42,-65,-68,-80,-85,-85,-80,-68,-65,-55,-45,-40,-35,-35,-30,-22,-8,3,8,22,32,35,38,55,98,122,130,142,145];
  function hist(list, x0) {
    list.forEach(function (v, i) {
      var x = Math.round(x0 + 6.5 * i);
      el(sub, 'path', { d: 'M' + (x + .5) + ' 914V' + Math.round(914 - v / 3), stroke: '#e8105f' });
    });
  }
  hist(h1, 7);
  hist(h2, 800.5);
  hist(h3, 1470.5 - 6.5 * (h3.length - 1));

  var macd = [].concat(
    pts(Z7, '8,577 40,620 70,660 100,678 150,677 175,655 210,635 270,612 295,572 320,565 345,530 380,532 430,490 460,503 490,497 530,497 575,520 605,500 640,407 655,400 680,355 710,320 740,265 780,228 800,226 820,235 860,250 880,283 915,290 955,380 995,452 1020,435 1045,407 1095,415 1150,467 1165,470 1225,540 1290,565 1340,632 1370,637 1400,620 1450,580 1480,580 1520,628 1550,640'),
    pts(F, '800,960 845,977 880,972 920,960 950,955 985,965 1030,977 1065,955 1105,945 1130,935 1150,900 1165,880 1180,882'),
    pts(Z8, '0,247 35,268 70,270 95,282 120,260 150,260 175,285 205,345 245,405 310,470 340,480 385,500 410,502 440,487 475,455 505,440 520,400 540,330 590,197')
  );
  var signal = [].concat(
    pts(Z7, '8,535 60,590 110,640 160,672 200,668 260,635 320,600 370,560 430,525 470,510 520,497 580,505 640,480 680,435 730,360 780,285 830,245 860,240 900,250 950,290 1010,375 1050,410 1070,422 1130,422 1180,445 1260,520 1330,580 1400,622 1440,620 1490,597 1520,597'),
    pts(F, '800,950 850,975 900,972 950,957 1000,965 1030,978 1070,960 1120,948 1150,925 1170,895 1190,886'),
    pts(Z8, '20,250 50,253 100,265 170,270 235,310 265,350 320,415 370,460 425,490 470,490 505,478 540,440 565,395 590,343')
  );
  poly(sub, macd, '#0a93ff');
  poly(sub, signal, '#ff6a00');
})();
```
